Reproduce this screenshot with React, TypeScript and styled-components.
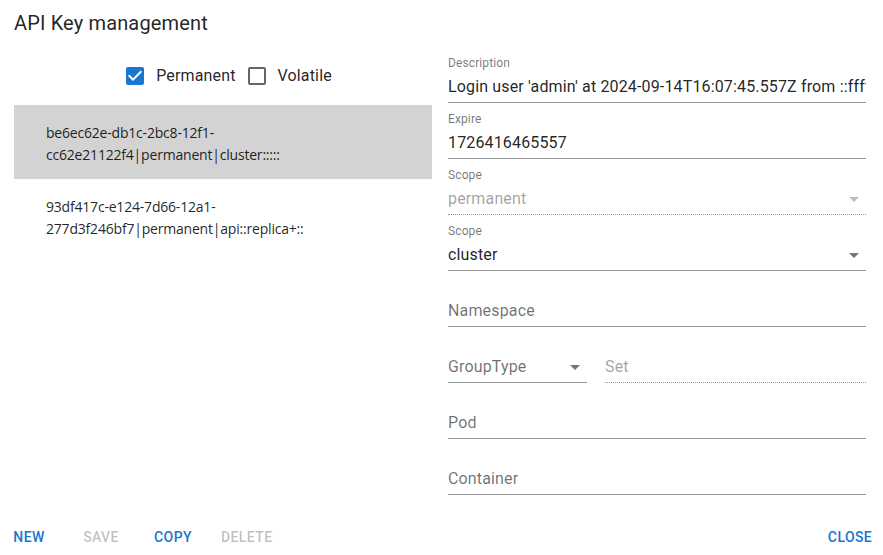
import React from "react";
import styled, { createGlobalStyle } from "styled-components";

const GlobalStyle = createGlobalStyle`
  html, body { margin: 0; padding: 0; background: #fff; }
  body { font-family: Roboto, "Liberation Sans", sans-serif; color: rgba(0,0,0,0.87); }
  * { box-sizing: border-box; }
`;

const Dialog = styled.div`
  width: 883px;
  height: 555px;
  display: flex;
  flex-direction: column;
  background: #fff;
  overflow: hidden;
`;

const Title = styled.h2`
  margin: 0;
  height: 46px;
  padding: 0 14px;
  font-size: 20px;
  font-weight: 400;
  line-height: 46px;
  letter-spacing: 0.0075em;
  color: rgba(0, 0, 0, 0.87);
`;

const Body = styled.div`
  flex: 1;
  display: grid;
  grid-template-columns: 418px 418px;
  column-gap: 16px;
  padding: 0 0 0 14px;
`;

const LeftColumn = styled.div`
  display: flex;
  flex-direction: column;
`;

const FilterRow = styled.div`
  height: 59px;
  display: flex;
  align-items: center;
  justify-content: center;
`;

const CheckLabel = styled.label`
  display: flex;
  align-items: center;
  font-size: 16px;
  line-height: 24px;
  letter-spacing: 0.00938em;
  color: rgba(0, 0, 0, 0.87);
  cursor: pointer;
`;

const CheckBoxIcon = styled.span<{ $checked: boolean }>`
  width: 42px;
  height: 42px;
  padding: 9px;
  display: inline-flex;
  color: ${(p) => (p.$checked ? "#1976d2" : "rgba(0,0,0,0.6)")};
  svg { width: 24px; height: 24px; fill: currentColor; }
`;

const KeyList = styled.ul`
  margin: 0;
  padding: 0;
  list-style: none;
`;

const KeyItem = styled.li<{ $selected?: boolean }>`
  padding: 17px 16px 13px 32px;
  background: ${(p) => (p.$selected ? "#d3d3d3" : "transparent")};
  font-family: "Open Sans", "Noto Sans", sans-serif;
  font-size: 14px;
  line-height: 22px;
  letter-spacing: -0.2px;
  color: rgba(0, 0, 0, 0.87);
  word-break: break-all;
`;

const KeyLine = styled.span`
  display: block;
`;

const RightColumn = styled.div`
  display: flex;
  flex-direction: column;
  padding-top: 1px;
`;

const FieldRow = styled.div`
  display: flex;
  gap: 18px;
`;

const Field = styled.div<{ $width?: number; $grow?: boolean }>`
  padding-top: 8px;
  display: flex;
  flex-direction: column;
  width: ${(p) => (p.$width ? `${p.$width}px` : "auto")};
  flex: ${(p) => (p.$grow ? "1" : "none")};
`;

const FieldLabel = styled.div`
  height: 16px;
  font-size: 12px;
  line-height: 16px;
  color: rgba(0, 0, 0, 0.54);
  letter-spacing: 0.00938em;
`;

const InputBox = styled.div<{ $disabled?: boolean }>`
  position: relative;
  margin-top: 4px;
  padding-bottom: 3px;
  border-bottom: 1px ${(p) => (p.$disabled ? "dotted" : "solid")} rgba(0, 0, 0, 0.42);
`;

const Value = styled.div<{ $tone?: "normal" | "placeholder" | "disabled"; $select?: boolean }>`
  height: 24px;
  font-size: 16px;
  line-height: 24px;
  letter-spacing: 0.00938em;
  white-space: nowrap;
  overflow: hidden;
  padding-right: ${(p) => (p.$select ? "24px" : "0")};
  color: ${(p) =>
    p.$tone === "disabled"
      ? "rgba(0,0,0,0.38)"
      : p.$tone === "placeholder"
      ? "rgba(0,0,0,0.56)"
      : "rgba(0,0,0,0.87)"};
`;

const Arrow = styled.svg<{ $disabled?: boolean }>`
  position: absolute;
  right: 0;
  top: 0;
  width: 24px;
  height: 24px;
  fill: ${(p) => (p.$disabled ? "rgba(0,0,0,0.26)" : "rgba(0,0,0,0.54)")};
`;

const Footer = styled.div`
  height: 44px;
  display: flex;
  align-items: flex-end;
  justify-content: space-between;
  padding: 0 1px 0 0;
`;

const ButtonGroup = styled.div`
  display: flex;
  gap: 8px;
  margin-left: -3px;
`;

const TextButton = styled.button<{ $disabled?: boolean }>`
  min-width: 64px;
  height: 36px;
  padding: 6px 8px;
  border: none;
  background: transparent;
  font-family: Roboto, "Liberation Sans", sans-serif;
  font-size: 14px;
  font-weight: 500;
  line-height: 24px;
  letter-spacing: 0.02857em;
  text-transform: uppercase;
  color: ${(p) => (p.$disabled ? "rgba(0,0,0,0.26)" : "#1976d2")};
  cursor: ${(p) => (p.$disabled ? "default" : "pointer")};
`;

const CHECKED = "M19 3H5c-1.11 0-2 .9-2 2v14c0 1.1.89 2 2 2h14c1.11 0 2-.9 2-2V5c0-1.1-.89-2-2-2zm-9 14l-5-5 1.41-1.41L10 14.17l7.59-7.59L19 8l-9 9z";
const UNCHECKED = "M19 5v14H5V5h14m0-2H5c-1.1 0-2 .9-2 2v14c0 1.1.9 2 2 2h14c1.1 0 2-.9 2-2V5c0-1.1-.9-2-2-2z";

const Check = ({ checked, label }: { checked: boolean; label: string }) => (
  <CheckLabel>
    <CheckBoxIcon $checked={checked}>
      <svg viewBox="0 0 24 24"><path d={checked ? CHECKED : UNCHECKED} /></svg>
    </CheckBoxIcon>
    {label}
  </CheckLabel>
);

type FieldProps = {
  label?: string;
  value: string;
  tone?: "normal" | "placeholder" | "disabled";
  select?: boolean;
  disabled?: boolean;
  width?: number;
  grow?: boolean;
};

const TextField = ({ label, value, tone = "normal", select, disabled, width, grow }: FieldProps) => (
  <Field $width={width} $grow={grow}>
    <FieldLabel>{label}</FieldLabel>
    <InputBox $disabled={disabled}>
      <Value $tone={tone} $select={select}>{value}</Value>
      {select && (
        <Arrow viewBox="0 0 24 24" $disabled={disabled}>
          <path d="M7 10l5 5 5-5z" />
        </Arrow>
      )}
    </InputBox>
  </Field>
);

export default function App() {
  return (
    <>
      <GlobalStyle />
      <Dialog>
        <Title>API Key management</Title>
        <Body>
          <LeftColumn>
            <FilterRow>
              <Check checked label="Permanent" />
              <Check checked={false} label="Volatile" />
            </FilterRow>
            <KeyList>
              <KeyItem $selected>
                <KeyLine>be6ec62e-db1c-2bc8-12f1-</KeyLine>
                <KeyLine>cc62e21122f4|permanent|cluster:::::</KeyLine>
              </KeyItem>
              <KeyItem>
                <KeyLine>93df417c-e124-7d66-12a1-</KeyLine>
                <KeyLine>277d3f246bf7|permanent|api::replica+::</KeyLine>
              </KeyItem>
            </KeyList>
          </LeftColumn>
          <RightColumn>
            <TextField label="Description" value="Login user 'admin' at 2024-09-14T16:07:45.557Z from ::ffff:127.0.0.1" />
            <TextField label="Expire" value="1726416465557" />
            <TextField label="Scope" value="permanent" tone="disabled" select disabled />
            <TextField label="Scope" value="cluster" select />
            <TextField value="Namespace" tone="placeholder" />
            <FieldRow>
              <TextField value="GroupType" tone="placeholder" select width={139} />
              <TextField value="Set" tone="disabled" disabled grow />
            </FieldRow>
            <TextField value="Pod" tone="placeholder" />
            <TextField value="Container" tone="placeholder" />
          </RightColumn>
        </Body>
        <Footer>
          <ButtonGroup>
            <TextButton>New</TextButton>
            <TextButton $disabled>Save</TextButton>
            <TextButton>Copy</TextButton>
            <TextButton $disabled>Delete</TextButton>
          </ButtonGroup>
          <TextButton>Close</TextButton>
        </Footer>
      </Dialog>
    </>
  );
}
